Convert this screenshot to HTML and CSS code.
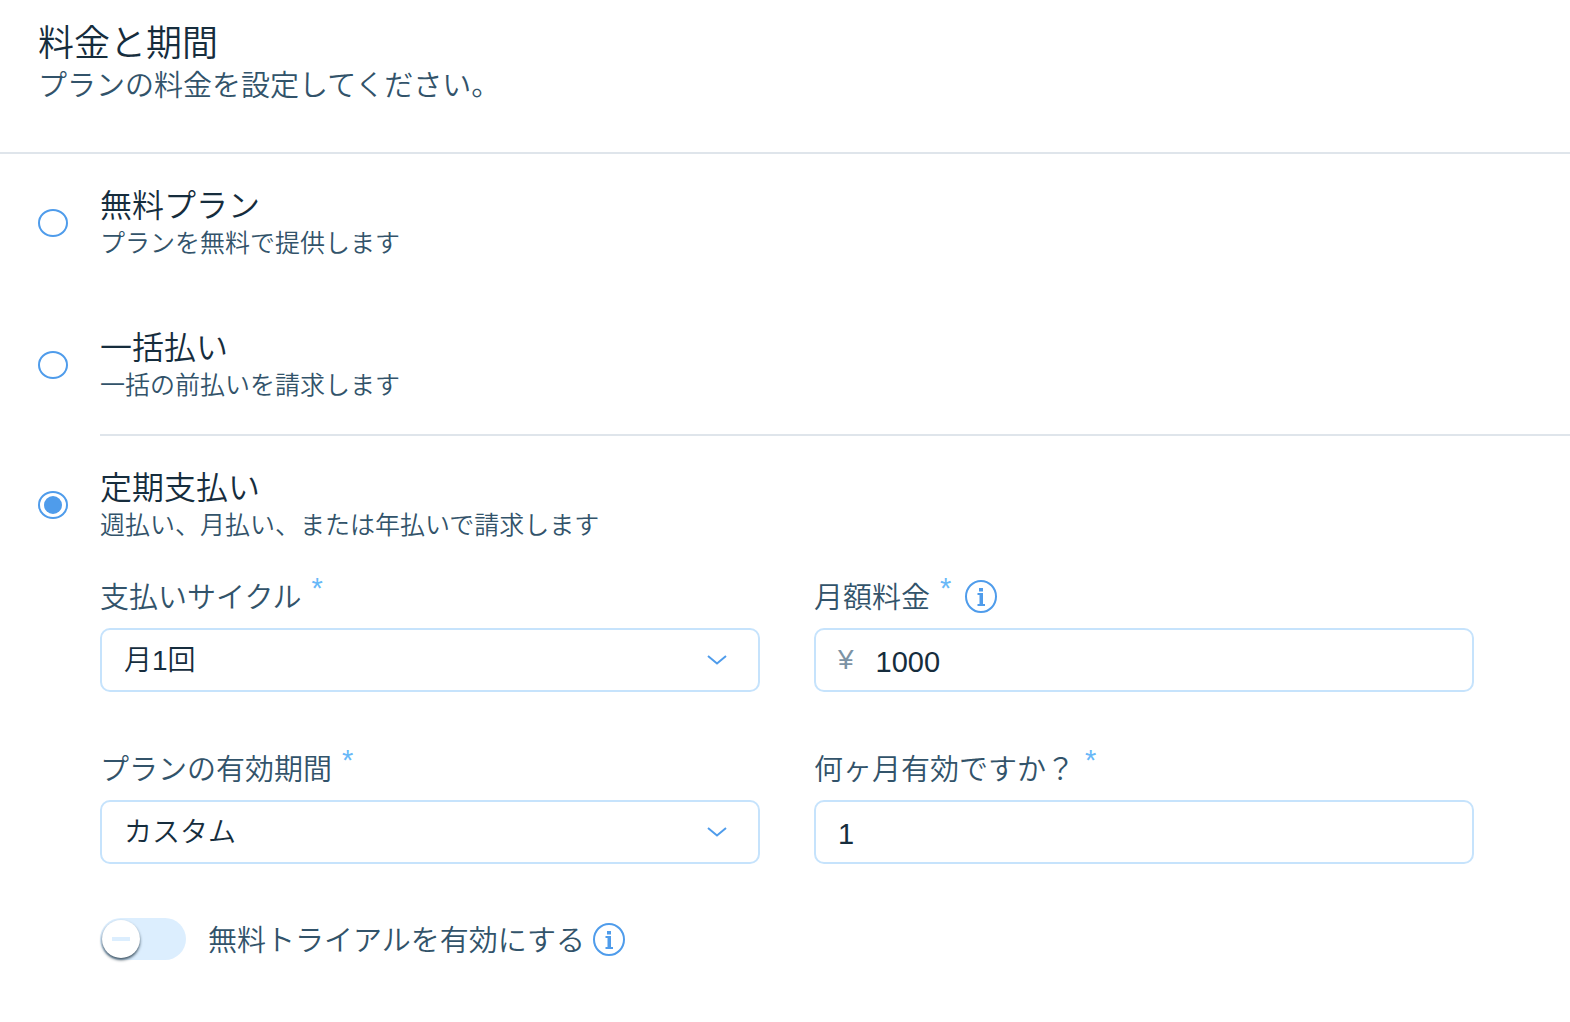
FILE: index.html
```html
<!DOCTYPE html>
<html lang="ja">
<head>
<meta charset="utf-8">
<meta name="viewport" content="width=device-width, initial-scale=1">
<title>料金と期間</title>
<link rel="stylesheet" href="styles.css">
</head>
<body>
<svg class="sprite" aria-hidden="true">
  <symbol id="info" viewBox="0 0 32 33">
    <ellipse cx="16" cy="16.5" rx="15" ry="15.5" fill="none" stroke="currentColor" stroke-width="2"/>
    <path fill="currentColor" d="M14 8h4v3.500h-4zM12.500 13h5.500V24h2v2h-7.500v-2h2v-9h-2z"/>
  </symbol>
  <symbol id="chevron" viewBox="0 0 20 12">
    <path fill="none" stroke="currentColor" stroke-width="2" d="M1 2l9 7.500L19 2"/>
  </symbol>
</svg>
<main class="card">
  <header class="card-header">
    <h1 class="title">料金と期間</h1>
    <p class="subtitle">プランの料金を設定してください。</p>
  </header>
  <form class="pricing">
    <div class="options">
      <label class="option">
        <input class="radio" type="radio" name="plan">
        <span class="option-text"><span class="option-title">無料プラン</span><span class="option-note">プランを無料で提供します</span></span>
      </label>
      <label class="option">
        <input class="radio" type="radio" name="plan">
        <span class="option-text"><span class="option-title">一括払い</span><span class="option-note">一括の前払いを請求します</span></span>
      </label>
    </div>
    <hr class="divider">
    <div class="options options-last">
      <label class="option">
        <input class="radio" type="radio" name="plan" checked>
        <span class="option-text"><span class="option-title">定期支払い</span><span class="option-note">週払い、月払い、または年払いで請求します</span></span>
      </label>
    </div>
    <div class="details">
      <div class="fields">
        <div class="field">
          <div class="label-row">
            <label for="cycle">支払いサイクル</label><span class="required">*</span>
          </div>
          <div class="control">
            <select id="cycle"><option>月1回</option></select>
            <svg class="chevron" aria-hidden="true"><use href="#chevron"/></svg>
          </div>
        </div>
        <div class="field">
          <div class="label-row">
            <label for="price">月額料金</label><span class="required">*</span>
            <button class="info info-spaced" type="button" aria-label="情報"><svg><use href="#info"/></svg></button>
          </div>
          <div class="control">
            <span class="currency">¥</span>
            <input id="price" type="text" value="1000">
          </div>
        </div>
        <div class="field">
          <div class="label-row">
            <label for="duration">プランの有効期間</label><span class="required">*</span>
          </div>
          <div class="control">
            <select id="duration"><option>カスタム</option></select>
            <svg class="chevron" aria-hidden="true"><use href="#chevron"/></svg>
          </div>
        </div>
        <div class="field">
          <div class="label-row">
            <label for="months">何ヶ月有効ですか？</label><span class="required">*</span>
          </div>
          <div class="control">
            <input id="months" type="text" value="1">
          </div>
        </div>
      </div>
      <div class="trial">
        <input class="toggle" id="trial" type="checkbox" role="switch">
        <label class="trial-label" for="trial">無料トライアルを有効にする</label>
        <button class="info" type="button" aria-label="情報"><svg><use href="#info"/></svg></button>
      </div>
    </div>
  </form>
</main>
</body>
</html>
```
FILE: styles.css
```css
:root {
  --ink: #162d3d;
  --muted: #32536a;
  --blue: #4f9ceb;
  --pale: #c6e3fc;
  --line: #dfe5eb;
}

* { box-sizing: border-box; }

body {
  margin: 0;
  background: #fff;
  color: var(--ink);
  font-family: "Liberation Sans", "Noto Sans CJK JP", sans-serif;
  font-weight: 350;
}

.sprite { display: none; }

.card-header {
  padding: 22px 38px 46px;
  border-bottom: 2px solid var(--line);
}

.title {
  margin: 0;
  font-size: 36px;
  font-weight: 350;
  line-height: 44px;
}

.subtitle {
  margin: 0;
  color: var(--muted);
  font-size: 29px;
  line-height: 40px;
}

.options {
  display: grid;
  gap: 68px;
  padding: 32px 38px;
}

.options-last { padding-bottom: 36px; }

.option {
  display: flex;
  align-items: center;
  gap: 32px;
}

.option-text { display: grid; }

.option-title {
  font-size: 32px;
  line-height: 40px;
}

.option-note {
  color: var(--muted);
  font-size: 25px;
  line-height: 34px;
}

.radio {
  appearance: none;
  display: grid;
  place-items: center;
  width: 30px;
  height: 28px;
  margin: 0;
  border: 2px solid var(--blue);
  border-radius: 50%;
  background: #fff;
}

.radio:checked::before {
  content: "";
  width: 18px;
  height: 18px;
  border-radius: 50%;
  background: var(--blue);
}

.divider {
  height: 2px;
  margin: 0 0 0 100px;
  border: 0;
  background: var(--line);
}

.details { padding: 0 96px 60px 100px; }

.fields {
  display: grid;
  grid-template-columns: 1fr 1fr;
  gap: 58px 54px;
}

.field {
  display: grid;
  gap: 14px;
}

.label-row {
  display: flex;
  align-items: center;
  height: 36px;
  color: var(--muted);
  font-size: 29px;
  line-height: 36px;
}

.label-row label,
.trial-label { padding-top: 4px; }

.required {
  align-self: flex-start;
  margin-left: 10px;
  color: #68b8f8;
  line-height: 20px;
}

.info {
  display: block;
  width: 32px;
  height: 33px;
  padding: 0;
  border: 0;
  background: none;
  color: var(--blue);
}

.info svg {
  display: block;
  width: 100%;
  height: 100%;
}

.info-spaced { margin-left: 14px; }

.control {
  display: flex;
  align-items: center;
  position: relative;
  height: 64px;
  border: 2px solid var(--pale);
  border-radius: 10px;
}

.control select,
.control input {
  flex: 1;
  min-width: 0;
  height: 100%;
  padding: 4px 22px 0;
  border: 0;
  outline: 0;
  background: none;
  color: var(--ink);
  font-family: inherit;
  font-size: 29px;
  font-weight: 350;
}

.control select {
  appearance: none;
  padding-top: 0;
  font-size: 28px;
}

.chevron {
  position: absolute;
  right: 31px;
  width: 20px;
  height: 12px;
  color: var(--blue);
  pointer-events: none;
}

.currency {
  padding-left: 22px;
  color: #7c93a5;
  font-size: 28px;
}

.trial {
  display: flex;
  align-items: center;
  gap: 8px;
  margin-top: 54px;
}

.toggle {
  appearance: none;
  display: flex;
  align-items: center;
  width: 86px;
  height: 42px;
  margin: 0 14px 0 0;
  padding: 2px;
  border-radius: 21px;
  background: #dceefe;
}

.toggle::before {
  content: "";
  width: 38px;
  height: 38px;
  border-radius: 50%;
  background: linear-gradient(#dceefe, #dceefe) center / 18px 4px no-repeat #fff;
  box-shadow: 0 2px 3px rgba(22, 45, 61, 0.8);
}

.trial-label {
  color: var(--muted);
  font-size: 29px;
  line-height: 36px;
}
```
